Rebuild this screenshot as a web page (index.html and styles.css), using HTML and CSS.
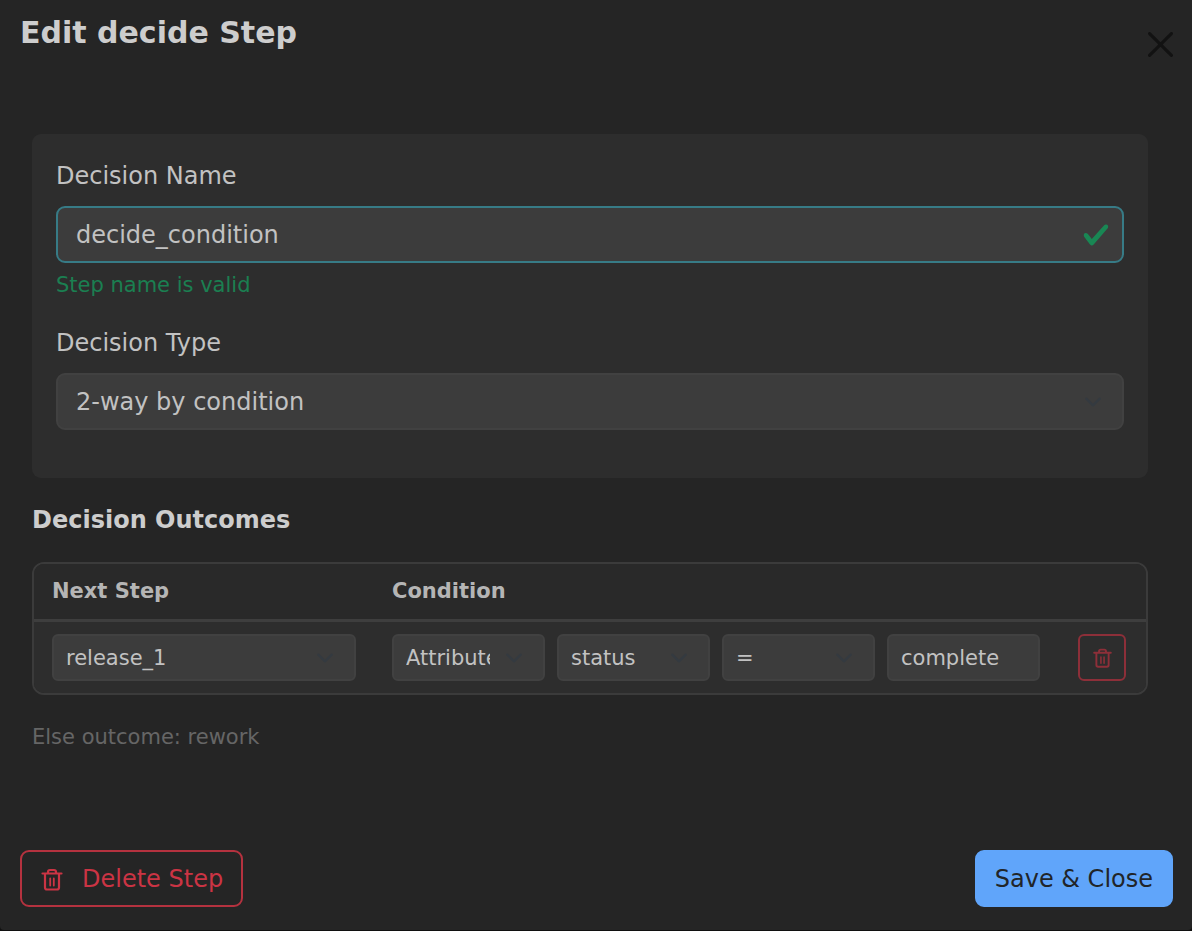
FILE: index.html
```html
<!DOCTYPE html>
<html lang="en">
<head>
<meta charset="utf-8">
<title>Edit decide Step</title>
<link rel="stylesheet" href="styles.css">
</head>
<body>
<svg class="sprite" aria-hidden="true">
  <symbol id="trash" viewBox="0 0 24 24">
    <path d="M2.500 6.500h19M8 6.500V5a2 2 0 0 1 2-2h4a2 2 0 0 1 2 2v1.500M5 6.500V20.500a2 2 0 0 0 2 2h10a2 2 0 0 0 2-2V6.500" fill="none" stroke="currentColor" stroke-width="2.200" stroke-linecap="round"/>
    <path d="M10.200 11.500v7M13.800 11.500v7" fill="none" stroke="currentColor" stroke-width="1.800" stroke-linecap="round"/>
  </symbol>
</svg>
<main class="modal" role="dialog" aria-labelledby="modal-title">
  <header class="modal-header">
    <h1 class="modal-title" id="modal-title">Edit decide Step</h1>
    <button class="close" type="button" aria-label="Close">
      <svg class="close-icon" viewBox="0 0 16 16" aria-hidden="true"><path fill="currentColor" d="M.293.293a1 1 0 0 1 1.414 0L8 6.586 14.293.293a1 1 0 1 1 1.414 1.414L9.414 8l6.293 6.293a1 1 0 0 1-1.414 1.414L8 9.414l-6.293 6.293a1 1 0 0 1-1.414-1.414L6.586 8 .293 1.707a1 1 0 0 1 0-1.414z"/></svg>
    </button>
  </header>
  <div class="modal-body">
    <section class="panel">
      <div class="field">
        <label class="label" for="name">Decision Name</label>
        <input class="control valid" id="name" type="text" value="decide_condition">
        <div class="feedback">Step name is valid</div>
      </div>
      <div class="field">
        <label class="label" for="type">Decision Type</label>
        <select class="control select" id="type"><option>2-way by condition</option></select>
      </div>
    </section>
    <h2 class="heading">Decision Outcomes</h2>
    <div class="table-frame">
      <table class="outcomes">
        <thead>
          <tr><th class="col-step">Next Step</th><th>Condition</th><th class="col-action"></th></tr>
        </thead>
        <tbody>
          <tr>
            <td><select class="control small select" aria-label="Next step"><option>release_1</option></select></td>
            <td>
              <div class="condition">
                <select class="control small select" aria-label="Source"><option>Attribute</option></select>
                <select class="control small select" aria-label="Attribute"><option>status</option></select>
                <select class="control small select" aria-label="Operator"><option>=</option></select>
                <input class="control small" type="text" aria-label="Value" value="complete">
              </div>
            </td>
            <td class="action"><button class="remove" type="button" aria-label="Remove outcome"><svg class="icon-small" aria-hidden="true"><use href="#trash"/></svg></button></td>
          </tr>
        </tbody>
      </table>
    </div>
    <p class="note">Else outcome: rework</p>
  </div>
  <footer class="modal-footer">
    <button class="button delete" type="button"><svg class="icon" aria-hidden="true"><use href="#trash"/></svg>Delete Step</button>
    <button class="button save" type="button">Save &amp; Close</button>
  </footer>
</main>
</body>
</html>
```

FILE: styles.css
```css
* { box-sizing: border-box; }

body {
  margin: 0;
  padding-bottom: 1px;
  background: #101010;
  color: #c2c2c2;
  font-family: "DejaVu Sans", sans-serif;
  font-size: 24px;
  line-height: 36px;
}

button, input, select { font: inherit; }

.sprite { display: none; }

.modal {
  display: flex;
  flex-direction: column;
  min-height: calc(100vh - 1px);
  background: #252525;
  border-radius: 0 0 4px 4px;
}

.modal-header {
  display: flex;
  justify-content: space-between;
  align-items: flex-start;
  height: 102px;
  padding: 10px 19px 0 20px;
}

.modal-title {
  margin: 0;
  font-size: 30px;
  line-height: 45px;
  color: #cdcdcd;
}

.close {
  display: flex;
  margin-top: 22px;
  padding: 0;
  border: 0;
  background: none;
  color: #121212;
}

.close-icon { width: 25px; height: 25px; }

.modal-body {
  flex: 1;
  padding: 32px 44px 0 32px;
}

.panel {
  padding: 24px;
  border-radius: 9px;
  background: #2d2d2d;
}

.field { margin-bottom: 24px; }

.label {
  display: block;
  margin-bottom: 12px;
}

.control {
  display: block;
  width: 100%;
  min-width: 0;
  height: 57px;
  margin: 0;
  padding: 0 18px;
  border: 2px solid #414141;
  border-radius: 9px;
  outline: 0;
  background-color: #3c3c3c;
  color: #c2c2c2;
}

.valid {
  padding-right: 54px;
  border-color: #377b86;
  background-image: url("data:image/svg+xml,%3Csvg xmlns='http://www.w3.org/2000/svg' viewBox='0 0 8 8'%3E%3Cpath fill='%23198754' d='M2.3 6.73.6 4.53c-.4-1.04.46-1.4 1.1-.8l1.1 1.4 3.4-3.8c.6-.63 1.6-.27 1.2.7l-4 4.6c-.43.5-.8.4-1.1.1z'/%3E%3C/svg%3E");
  background-repeat: no-repeat;
  background-position: right 12px center;
  background-size: 28px 28px;
}

.select {
  appearance: none;
  padding-right: 53px;
  background-image: url("data:image/svg+xml,%3Csvg xmlns='http://www.w3.org/2000/svg' viewBox='0 0 16 16'%3E%3Cpath fill='none' stroke='%23343a40' stroke-linecap='round' stroke-linejoin='round' stroke-width='2' d='m2 5 6 6 6-6'/%3E%3C/svg%3E");
  background-repeat: no-repeat;
  background-position: right 17px center;
  background-size: 24px 18px;
}

.small {
  height: 47px;
  padding-left: 12px;
  border-radius: 6px;
  font-size: 21px;
}

.feedback {
  margin-top: 6px;
  color: #1b7f51;
  font-size: 21px;
  line-height: 32px;
}

.heading {
  margin: 24px 0;
  font-size: 24px;
  line-height: 36px;
  color: #cdcdcd;
}

.table-frame {
  overflow: hidden;
  border: 2px solid #3b3b3b;
  border-radius: 12px;
}

.outcomes {
  width: 100%;
  table-layout: fixed;
  border-spacing: 0;
  background: #2d2d2d;
  font-size: 21px;
  line-height: 32px;
}

.outcomes th {
  padding: 11px 18px 12px;
  border-bottom: 3px solid #3e3e3e;
  background: #292929;
  color: #b5b5b5;
  text-align: left;
}

.outcomes td { padding: 12px 18px; }

.outcomes .col-step { width: 340px; }

.outcomes .col-action { width: 88px; }

.outcomes .action { padding: 12px 0; }

.condition {
  display: grid;
  grid-template-columns: repeat(4, 1fr);
  gap: 12px;
}

.remove {
  display: flex;
  align-items: center;
  justify-content: center;
  width: 48px;
  height: 47px;
  margin: 0 auto;
  padding: 0;
  border: 2px solid #8d2f39;
  border-radius: 6px;
  background: none;
  color: #8d2f39;
}

.icon-small { width: 21px; height: 21px; }

.icon { width: 24px; height: 24px; }

.note {
  margin: 24px 0 0;
  color: #666666;
  font-size: 21px;
}

.modal-footer {
  display: flex;
  justify-content: space-between;
  padding: 0 19px 23px 20px;
}

.button {
  display: flex;
  align-items: center;
  gap: 18px;
  height: 57px;
  padding: 0 18px;
  border: 2px solid;
  border-radius: 9px;
}

.delete {
  border-color: #b5323f;
  background: none;
  color: #cb3444;
}

.save {
  border-color: #60a5fa;
  background: #60a5fa;
  color: #212529;
}
```
